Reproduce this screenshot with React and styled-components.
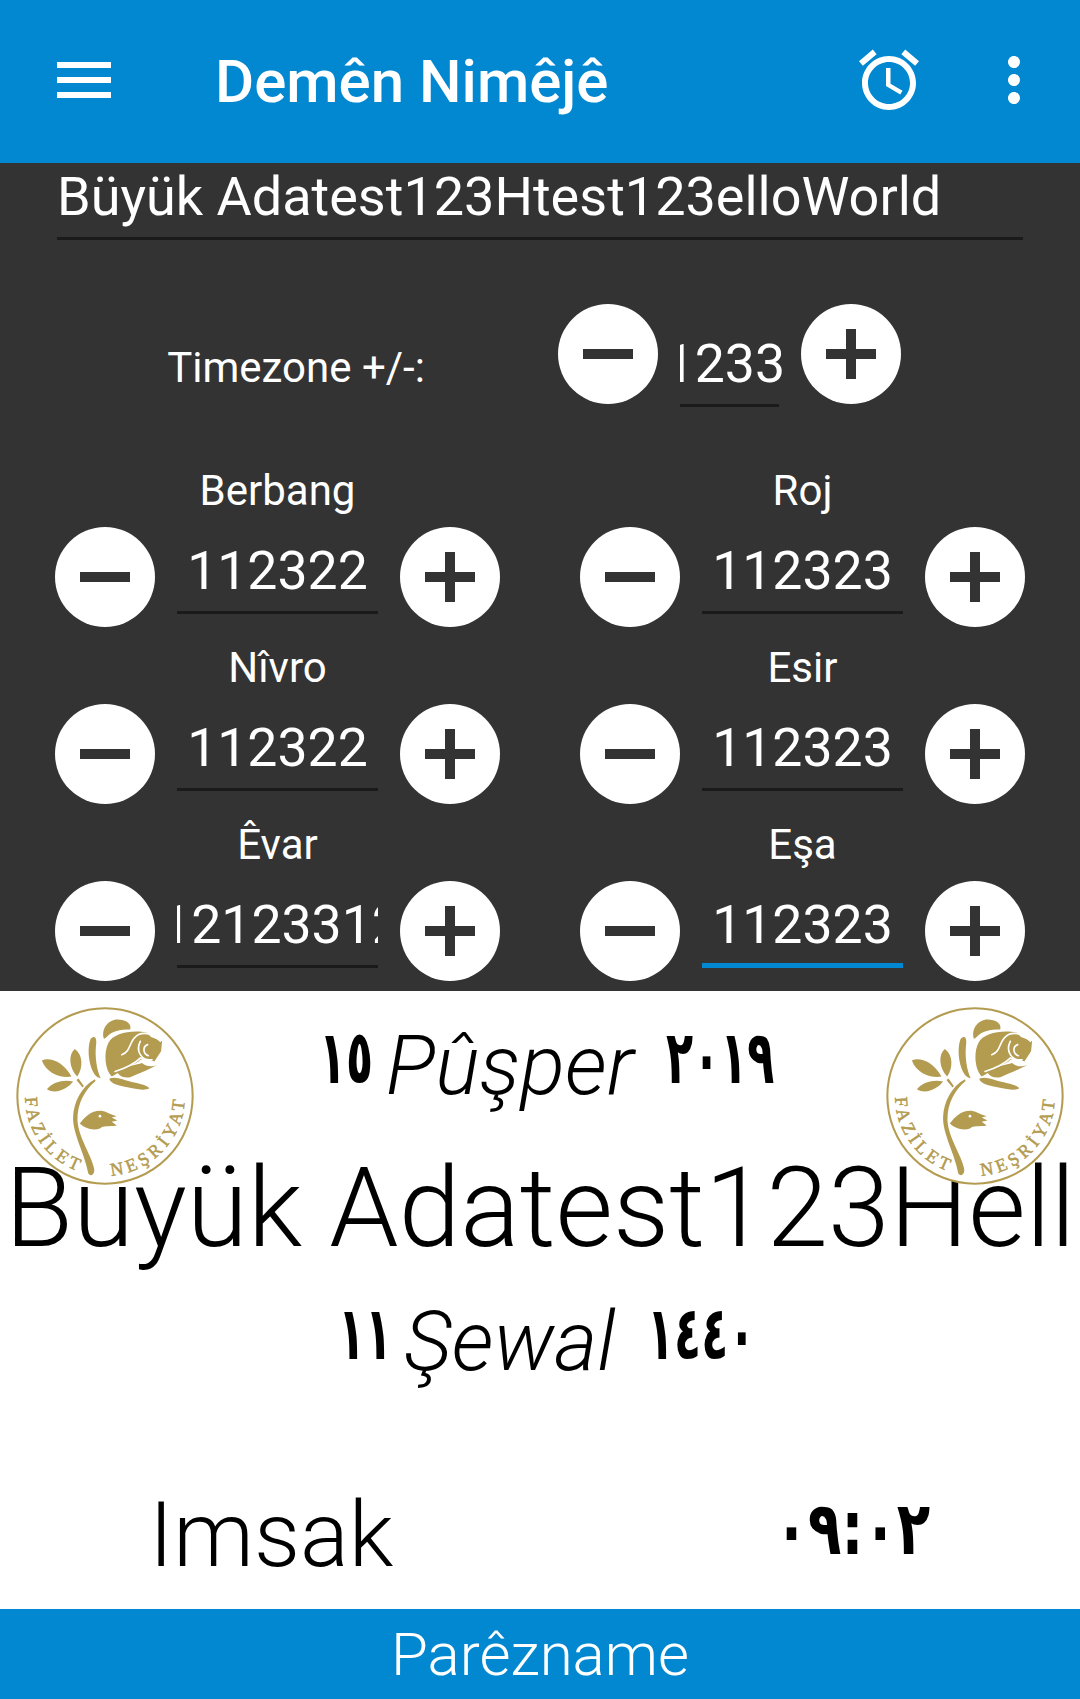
import React from "react";
import styled, { createGlobalStyle } from "styled-components";

const Global = createGlobalStyle`
  html, body { margin: 0; padding: 0; background: #fff; }
  * { box-sizing: border-box; }
  body { font-family: Roboto, "Noto Sans", sans-serif; }
`;

const Page = styled.div`
  width: 1080px;
  height: 1699px;
  display: flex;
  flex-direction: column;
  overflow: hidden;
`;

const AppBar = styled.header`
  height: 163px;
  background: #0288d1;
  color: #fff;
  display: flex;
  align-items: center;
  padding: 0 30px 4px 48px;
  flex: none;
`;

const IconSlot = styled.svg`
  width: 72px;
  height: 72px;
  fill: #fff;
  flex: none;
  display: block;
`;

const Title = styled.h1`
  margin: 4px 0 0 95px;
  font: 500 60px/1 Roboto, sans-serif;
  flex: 1;
  white-space: nowrap;
`;

const AlarmWrap = styled.div`
  margin-right: 53px;
  display: flex;
`;

const Panel = styled.section`
  background: #333;
  height: 828px;
  padding: 0 55px;
  overflow: hidden;
  flex: none;
  color: #fff;
`;

const NameInput = styled.div`
  margin: 0 2px;
  height: 77px;
  line-height: 68px;
  font-size: 54px;
  border-bottom: 3px solid #1a1a1a;
  white-space: nowrap;
  overflow: hidden;
`;

const TimezoneRow = styled.div`
  margin-top: 64px;
  display: flex;
  align-items: flex-start;
`;

const TimezoneLabel = styled.div`
  width: 482px;
  margin-right: 21px;
  margin-top: 37px;
  height: 54px;
  line-height: 54px;
  font-size: 42px;
  text-align: center;
`;

const FieldGrid = styled.div`
  margin-top: 52px;
  display: grid;
  grid-template-columns: 445px 445px;
  column-gap: 80px;
  row-gap: 9px;
`;

const FieldLabel = styled.div`
  height: 62px;
  line-height: 64px;
  margin-bottom: 6px;
  font-size: 42px;
  text-align: center;
`;

const Stepper = styled.div`
  display: flex;
  align-items: flex-start;
  gap: 22px;
`;

const RoundButton = styled.button`
  width: 100px;
  height: 100px;
  border-radius: 50%;
  border: 0;
  padding: 0;
  background: #fff;
  flex: none;
  display: flex;
  align-items: center;
  justify-content: center;
`;

const Glyph = styled.svg`
  width: 50px;
  height: 50px;
  fill: #333;
  display: block;
`;

const Value = styled.div`
  width: ${(p) => p.$width}px;
  margin-top: ${(p) => p.$top || 0}px;
  flex: none;
`;

const ValueText = styled.div`
  width: calc(100% + ${(p) => p.$overhang || 0}px);
  height: ${(p) => (p.$focused ? 82 : 84)}px;
  line-height: 88px;
  font-size: 53.6px;
  overflow: hidden;
  display: flex;
  justify-content: ${(p) => p.$justify || "center"};
  padding-left: ${(p) => p.$nudge || 0}px;
  white-space: nowrap;
`;

const Underline = styled.div`
  height: ${(p) => (p.$focused ? 5 : 3)}px;
  background: ${(p) => (p.$focused ? "#0288d1" : "#1a1a1a")};
`;

const Sheet = styled.section`
  flex: 1;
  background: #fff;
  color: #000;
  min-height: 0;
  display: flex;
  flex-direction: column;
`;

const DateRow = styled.div`
  display: grid;
  grid-template-columns: 178px 1fr 178px;
  padding: 15px 16px 0;
`;

const Logo = styled.svg`
  width: 178px;
  height: 180px;
  display: block;
  position: relative;
  z-index: 1;
`;

const DateLine = styled.div`
  display: flex;
  justify-content: center;
  align-items: center;
  height: ${(p) => p.$height}px;
  padding-left: 14px;
  white-space: pre;
  font-weight: 300;
  font-style: italic;
  font-size: 83px;
  line-height: 1;
`;

const Numerals = styled.span`
  display: inline-block;
  font-family: "DejaVu Sans", sans-serif;
  font-style: normal;
  font-weight: 700;
  font-size: 74px;
  transform-origin: left center;
  transform: translateY(-8px) scaleX(0.6);
  margin-left: ${(p) => (p.$trailing ? "-8px" : "0")};
  margin-right: calc(${(p) => -0.2424 * p.$n}em - ${(p) => (p.$trailing ? 0 : 8)}px);
`;

const BigName = styled.div`
  margin: -43px 9px 0 5px;
  height: 130px;
  line-height: 130px;
  font-size: 111px;
  font-weight: 300;
  white-space: nowrap;
  overflow: hidden;
`;

const PrayerRow = styled.div`
  margin-top: auto;
  margin-bottom: 19px;
  display: flex;
  align-items: center;
  justify-content: space-between;
  padding: 0 150px 0 149px;
  height: 110px;
`;

const PrayerName = styled.span`
  font-size: 91px;
  font-weight: 300;
`;

const PrayerTime = styled.span`
  display: inline-block;
  font-family: "DejaVu Sans", sans-serif;
  font-weight: 700;
  font-size: 74px;
  transform-origin: right center;
  transform: translateY(-7px) scaleX(0.74);
`;

const BottomBar = styled.footer`
  height: 90px;
  background: #0288d1;
  color: #fff;
  display: flex;
  align-items: center;
  justify-content: center;
  font-size: 60px;
  font-weight: 300;
  flex: none;
`;

const MinusIcon = () => (
  <Glyph viewBox="0 0 50 50"><rect x="0" y="20" width="50" height="10" /></Glyph>
);
const PlusIcon = () => (
  <Glyph viewBox="0 0 50 50">
    <rect x="0" y="20" width="50" height="10" />
    <rect x="20" y="0" width="10" height="50" />
  </Glyph>
);

const gold = "#b39b50";

const RoseLogo = () => (
  <Logo viewBox="50 80 530 536">
    <circle cx="315" cy="348" r="261" fill="#fff" stroke={gold} strokeWidth="6" />
    <g fill={gold}>
      <path d="M312 178C302 148 325 120 352 120C376 120 396 132 390 150C360 150 335 155 320 172Z" />
      <path d="M325 190C340 160 400 150 440 160L452 172L485 185L482 215L462 245C440 235 420 235 415 245C395 255 360 275 335 290C315 270 310 220 325 190Z" />
      <path d="M272 178C285 165 292 175 288 200C285 230 290 270 302 295C285 296 270 265 267 230C265 205 268 190 272 178Z" />
      <path d="M328 296C350 288 370 300 390 305C410 310 440 315 447 325C430 335 400 325 370 320C345 315 328 306 328 296Z" />
      <path d="M350 270C380 260 410 255 425 250C440 262 455 262 472 255C450 267 420 280 390 292C370 297 350 285 350 270Z" />
      <path d="M127 242C150 232 190 245 215 290C185 296 140 280 127 242Z" />
      <path d="M225 208C250 225 250 265 232 290C208 265 205 225 225 208Z" />
      <path d="M142 328C160 305 195 298 220 305C205 325 170 345 142 328Z" />
      <path d="M285 298C245 320 222 365 220 410C218 460 255 520 265 578C272 590 287 582 282 562C275 525 235 470 233 420C232 370 255 330 287 303Z" />
      <path d="M230 300L236 296L252 318L248 323Z" />
      <path d="M240 430C255 410 275 390 305 392C320 395 335 405 350 408L335 412L352 421L335 425L350 436C325 440 310 435 300 445C280 452 255 445 240 430Z" />
    </g>
    <g fill="none" stroke="#fff" strokeWidth="5" strokeLinecap="round">
      <path d="M365 225C395 215 385 180 415 165C440 155 465 170 480 185" />
      <path d="M420 185C405 215 425 245 455 240" />
      <path d="M442 195C427 200 427 222 444 228" />
      <path d="M345 275C375 265 405 250 420 235L445 245L470 250" />
    </g>
    <circle cx="300" cy="408" r="4" fill="#fff" />
    <defs>
      <path id="ring" d="M77 348A238 238 0 0 0 553 348" />
    </defs>
    <text fill={gold} stroke={gold} strokeWidth="1.5" fontFamily="Liberation Serif, serif" fontSize="54">
      <textPath href="#ring" startOffset="4" textLength="285">FAZİLET</textPath>
    </text>
    <text fill={gold} stroke={gold} strokeWidth="1.5" fontFamily="Liberation Serif, serif" fontSize="54">
      <textPath href="#ring" startOffset="392" textLength="342">NEŞRİYAT</textPath>
    </text>
  </Logo>
);

const StepperField = ({ value, width = 201, justify, focused, top, overhang, nudge }) => (
  <Stepper>
    <RoundButton aria-label="minus"><MinusIcon /></RoundButton>
    <Value $width={width} $top={top}>
      <ValueText $justify={justify} $focused={focused} $overhang={overhang} $nudge={nudge}>{value}</ValueText>
      <Underline $focused={focused} />
    </Value>
    <RoundButton aria-label="plus"><PlusIcon /></RoundButton>
  </Stepper>
);

const fields = [
  { label: "Berbang", value: "112322" },
  { label: "Roj", value: "112323" },
  { label: "Nîvro", value: "112322" },
  { label: "Esir", value: "112323" },
  { label: "Êvar", value: "12123312", nudge: 8 },
  { label: "Eşa", value: "112323", focused: true },
];

export default function App() {
  return (
    <Page>
      <Global />
      <AppBar>
        <IconSlot viewBox="0 0 24 24"><path d="M3 18h18v-2H3v2zm0-5h18v-2H3v2zm0-7v2h18V6H3z" /></IconSlot>
        <Title>Demên Nimêjê</Title>
        <AlarmWrap>
          <IconSlot viewBox="0 0 24 24">
            <path d="M22 5.72l-4.6-3.86-1.29 1.53 4.6 3.86L22 5.72zM7.88 3.39L6.6 1.86 2 5.71l1.29 1.53 4.59-3.85zM12.5 8H11v6l4.75 2.85.75-1.23-4-2.37V8zM12 4c-4.97 0-9 4.03-9 9s4.03 9 9 9 9-4.03 9-9-4.03-9-9-9zm0 16c-3.87 0-7-3.13-7-7s3.13-7 7-7 7 3.13 7 7-3.13 7-7 7z" />
          </IconSlot>
        </AlarmWrap>
        <IconSlot viewBox="0 0 24 24">
          <path d="M12 8c1.1 0 2-.9 2-2s-.9-2-2-2-2 .9-2 2 .9 2 2 2zm0 2c-1.1 0-2 .9-2 2s.9 2 2 2 2-.9 2-2-.9-2-2-2zm0 6c-1.1 0-2 .9-2 2s.9 2 2 2 2-.9 2-2-.9-2-2-2z" />
        </IconSlot>
      </AppBar>

      <Panel>
        <NameInput>Büyük Adatest123Htest123elloWorld</NameInput>
        <TimezoneRow>
          <TimezoneLabel>Timezone +/-:</TimezoneLabel>
          <StepperField value="1233" width={99} justify="flex-end" top={16} overhang={6} />
        </TimezoneRow>
        <FieldGrid>
          {fields.map((f) => (
            <div key={f.label}>
              <FieldLabel>{f.label}</FieldLabel>
              <StepperField value={f.value} focused={f.focused} nudge={f.nudge} />
            </div>
          ))}
        </FieldGrid>
      </Panel>

      <Sheet>
        <DateRow>
          <RoseLogo />
          <DateLine $height={118}>
            <Numerals $n={2}>١٥</Numerals> Pûşper  <Numerals $n={4} $trailing>٢٠١٩</Numerals>
          </DateLine>
          <RoseLogo />
        </DateRow>
        <BigName>Büyük Adatest123Hello</BigName>
        <DateLine $height={136}>
          <Numerals $n={2}>١١</Numerals> Şewal  <Numerals $n={4} $trailing>١٤٤٠</Numerals>
        </DateLine>
        <PrayerRow>
          <PrayerName>Imsak</PrayerName>
          <PrayerTime>٠٩:٠٢</PrayerTime>
        </PrayerRow>
      </Sheet>

      <BottomBar>Parêzname</BottomBar>
    </Page>
  );
}
